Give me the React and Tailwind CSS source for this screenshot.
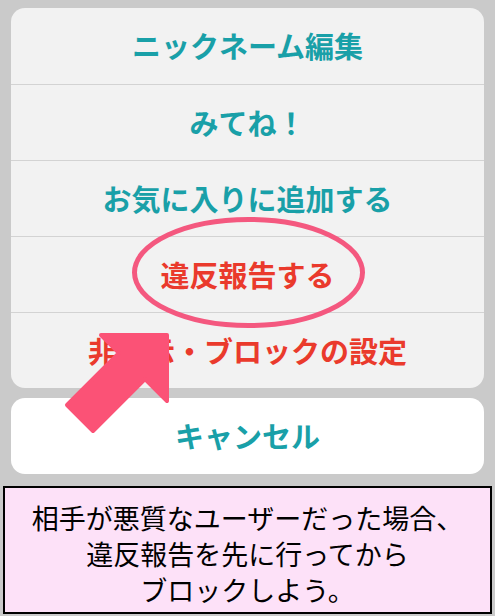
// ActionSheet.jsx
// Folha de ações do perfil, com a anotação (elipse + seta) sobreposta
// e o quadro de dica rosa embaixo.

const JP = "font-['Noto_Sans_CJK_JP','Noto_Sans',sans-serif]"

const opcoes = [
  { label: 'ニックネーム編集', perigo: false },
  { label: 'みてね！', perigo: false },
  { label: 'お気に入りに追加する', perigo: false },
  { label: '違反報告する', perigo: true },
  { label: '非表示・ブロックの設定', perigo: true },
]

export default function App() {
  return (
    <div className={`relative w-[495px] h-[616px] bg-[#cacaca] overflow-hidden ${JP}`}>
      <div className="px-[11px] pt-[8px]">
        <div className="bg-[#f2f2f2] rounded-[14px] overflow-hidden">
          {opcoes.map((o, i) => (
            <div
              key={o.label}
              className={`h-[76px] flex items-center justify-center text-[29px] font-bold ${
                i > 0 ? 'border-t border-[#d3d3d3]' : ''
              } ${o.perigo ? 'text-[#ea3a2c]' : 'text-[#19a0a8]'}`}
            >
              {o.label}
            </div>
          ))}
        </div>

        <div className="mt-[10px] h-[76px] bg-white rounded-[14px] flex items-center justify-center text-[29px] font-bold text-[#19a0a8]">
          キャンセル
        </div>
      </div>

      <div className="mt-[12px] ml-[3px] w-[489px] h-[128px] border-2 border-black bg-[#fde1f8] pt-[12px] text-center text-[27px] leading-[36px] text-black">
        相手が悪質なユーザーだった場合、
        <br />
        違反報告を先に行ってから
        <br />
        ブロックしよう。
      </div>

      {/* anotação por cima da folha */}
      <svg className="absolute inset-0 pointer-events-none" width="495" height="616" viewBox="0 0 495 616">
        <ellipse cx="248.5" cy="272.5" rx="114" ry="53" fill="none" stroke="#f4587f" strokeWidth="5" />
        <polygon
          points="167,335 101,335 119,353 67,405 93,431 145,379 167,401"
          fill="#fb5276"
          stroke="#fb5276"
          strokeWidth="4"
          strokeLinejoin="round"
        />
      </svg>
    </div>
  )
}
